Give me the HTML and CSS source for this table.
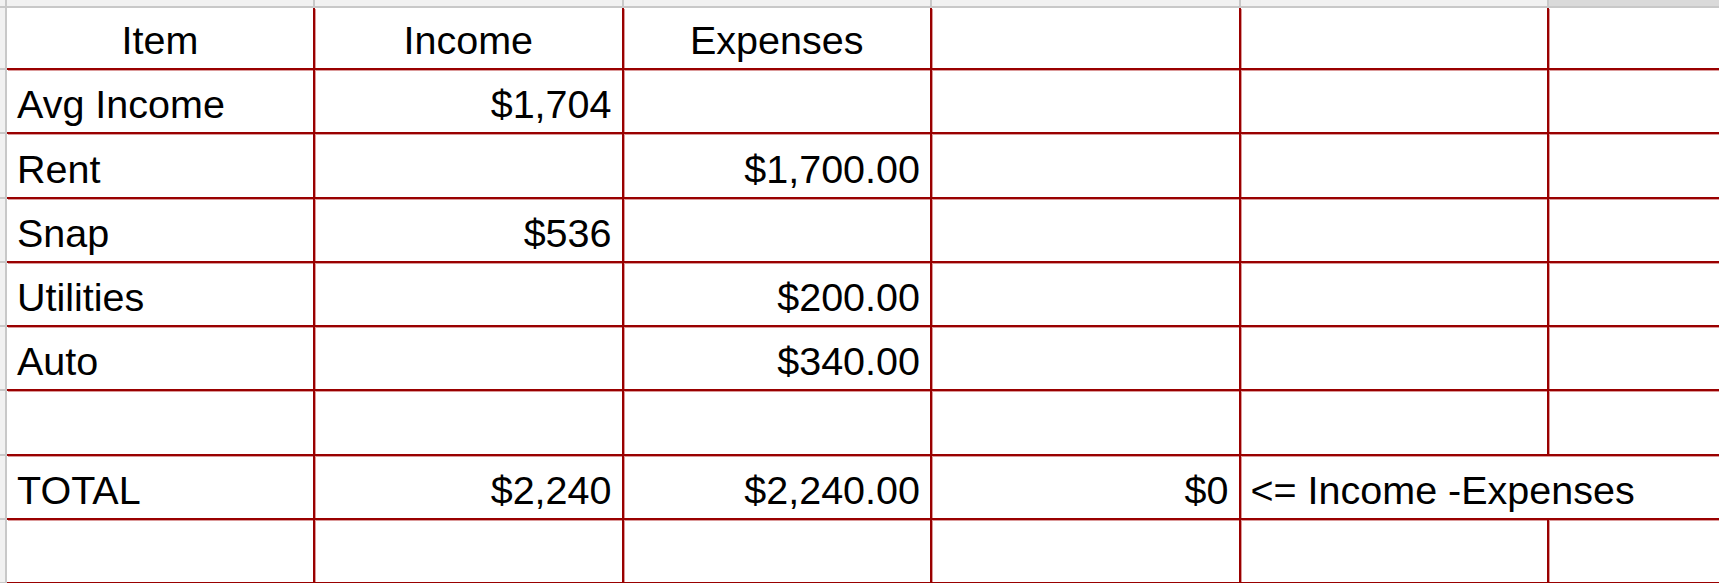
FILE: index.html
```html
<!DOCTYPE html>
<html>
<head>
<meta charset="utf-8">
<link rel="stylesheet" href="styles.css">
</head>
<body>
<div class="sheet">
  <div class="corner"></div>
  <div class="colhead"></div>
  <div class="colhead"></div>
  <div class="colhead"></div>
  <div class="colhead"></div>
  <div class="colhead"></div>
  <div class="colhead colhead-dark"></div>

  <div class="rowhead"></div>
  <div class="cell center">Item</div>
  <div class="cell center">Income</div>
  <div class="cell center">Expenses</div>
  <div class="cell"></div>
  <div class="cell"></div>
  <div class="cell last"></div>

  <div class="rowhead"></div>
  <div class="cell">Avg Income</div>
  <div class="cell right">$1,704</div>
  <div class="cell"></div>
  <div class="cell"></div>
  <div class="cell"></div>
  <div class="cell last"></div>

  <div class="rowhead"></div>
  <div class="cell">Rent</div>
  <div class="cell"></div>
  <div class="cell right">$1,700.00</div>
  <div class="cell"></div>
  <div class="cell"></div>
  <div class="cell last"></div>

  <div class="rowhead"></div>
  <div class="cell">Snap</div>
  <div class="cell right">$536</div>
  <div class="cell"></div>
  <div class="cell"></div>
  <div class="cell"></div>
  <div class="cell last"></div>

  <div class="rowhead"></div>
  <div class="cell">Utilities</div>
  <div class="cell"></div>
  <div class="cell right">$200.00</div>
  <div class="cell"></div>
  <div class="cell"></div>
  <div class="cell last"></div>

  <div class="rowhead"></div>
  <div class="cell">Auto</div>
  <div class="cell"></div>
  <div class="cell right">$340.00</div>
  <div class="cell"></div>
  <div class="cell"></div>
  <div class="cell last"></div>

  <div class="rowhead"></div>
  <div class="cell"></div>
  <div class="cell"></div>
  <div class="cell"></div>
  <div class="cell"></div>
  <div class="cell"></div>
  <div class="cell last"></div>

  <div class="rowhead"></div>
  <div class="cell">TOTAL</div>
  <div class="cell right">$2,240</div>
  <div class="cell right">$2,240.00</div>
  <div class="cell right">$0</div>
  <div class="cell span2 last">&lt;= Income -Expenses</div>

  <div class="rowhead"></div>
  <div class="cell"></div>
  <div class="cell"></div>
  <div class="cell"></div>
  <div class="cell"></div>
  <div class="cell"></div>
  <div class="cell last"></div>
</div>
</body>
</html>
```

FILE: styles.css
```css
html, body {
  margin: 0;
  padding: 0;
  background: #ffffff;
  overflow: hidden;
}

body {
  width: 1719px;
  height: 583px;
}

.sheet {
  display: grid;
  width: max-content;
  grid-template-columns: 7px 308px 308.5px 308.5px 308.5px 308.5px 308.5px;
  grid-template-rows: 8px 62px repeat(8, 64.3px);
  font-family: "Liberation Sans", Arial, sans-serif;
  font-size: 39.5px;
  color: #000000;
}

.corner {
  background: #f1f1f1;
  border-right: 2px solid #c8c8c8;
  border-bottom: 2px solid #c8c8c8;
  box-sizing: border-box;
}

.colhead {
  background: #f1f1f1;
  border-right: 2px solid #c8c8c8;
  border-bottom: 2px solid #c8c8c8;
  box-sizing: border-box;
}

.colhead-dark {
  background: #dadada;
}

.rowhead {
  background: #f1f1f1;
  border-right: 2px solid #c8c8c8;
  border-bottom: 2px solid #c8c8c8;
  box-sizing: border-box;
}

.cell {
  box-sizing: border-box;
  border-right: 2px solid #990000;
  border-bottom: 2px solid #990000;
  box-shadow: 1px 1px 0 rgba(190, 70, 70, 0.55);
  padding: 0 10px 5px 10px;
  display: flex;
  align-items: flex-end;
  justify-content: flex-start;
  white-space: nowrap;
  line-height: normal;
  overflow: visible;
}

.center {
  justify-content: center;
}

.right {
  justify-content: flex-end;
}

.span2 {
  grid-column: span 2;
}
```
